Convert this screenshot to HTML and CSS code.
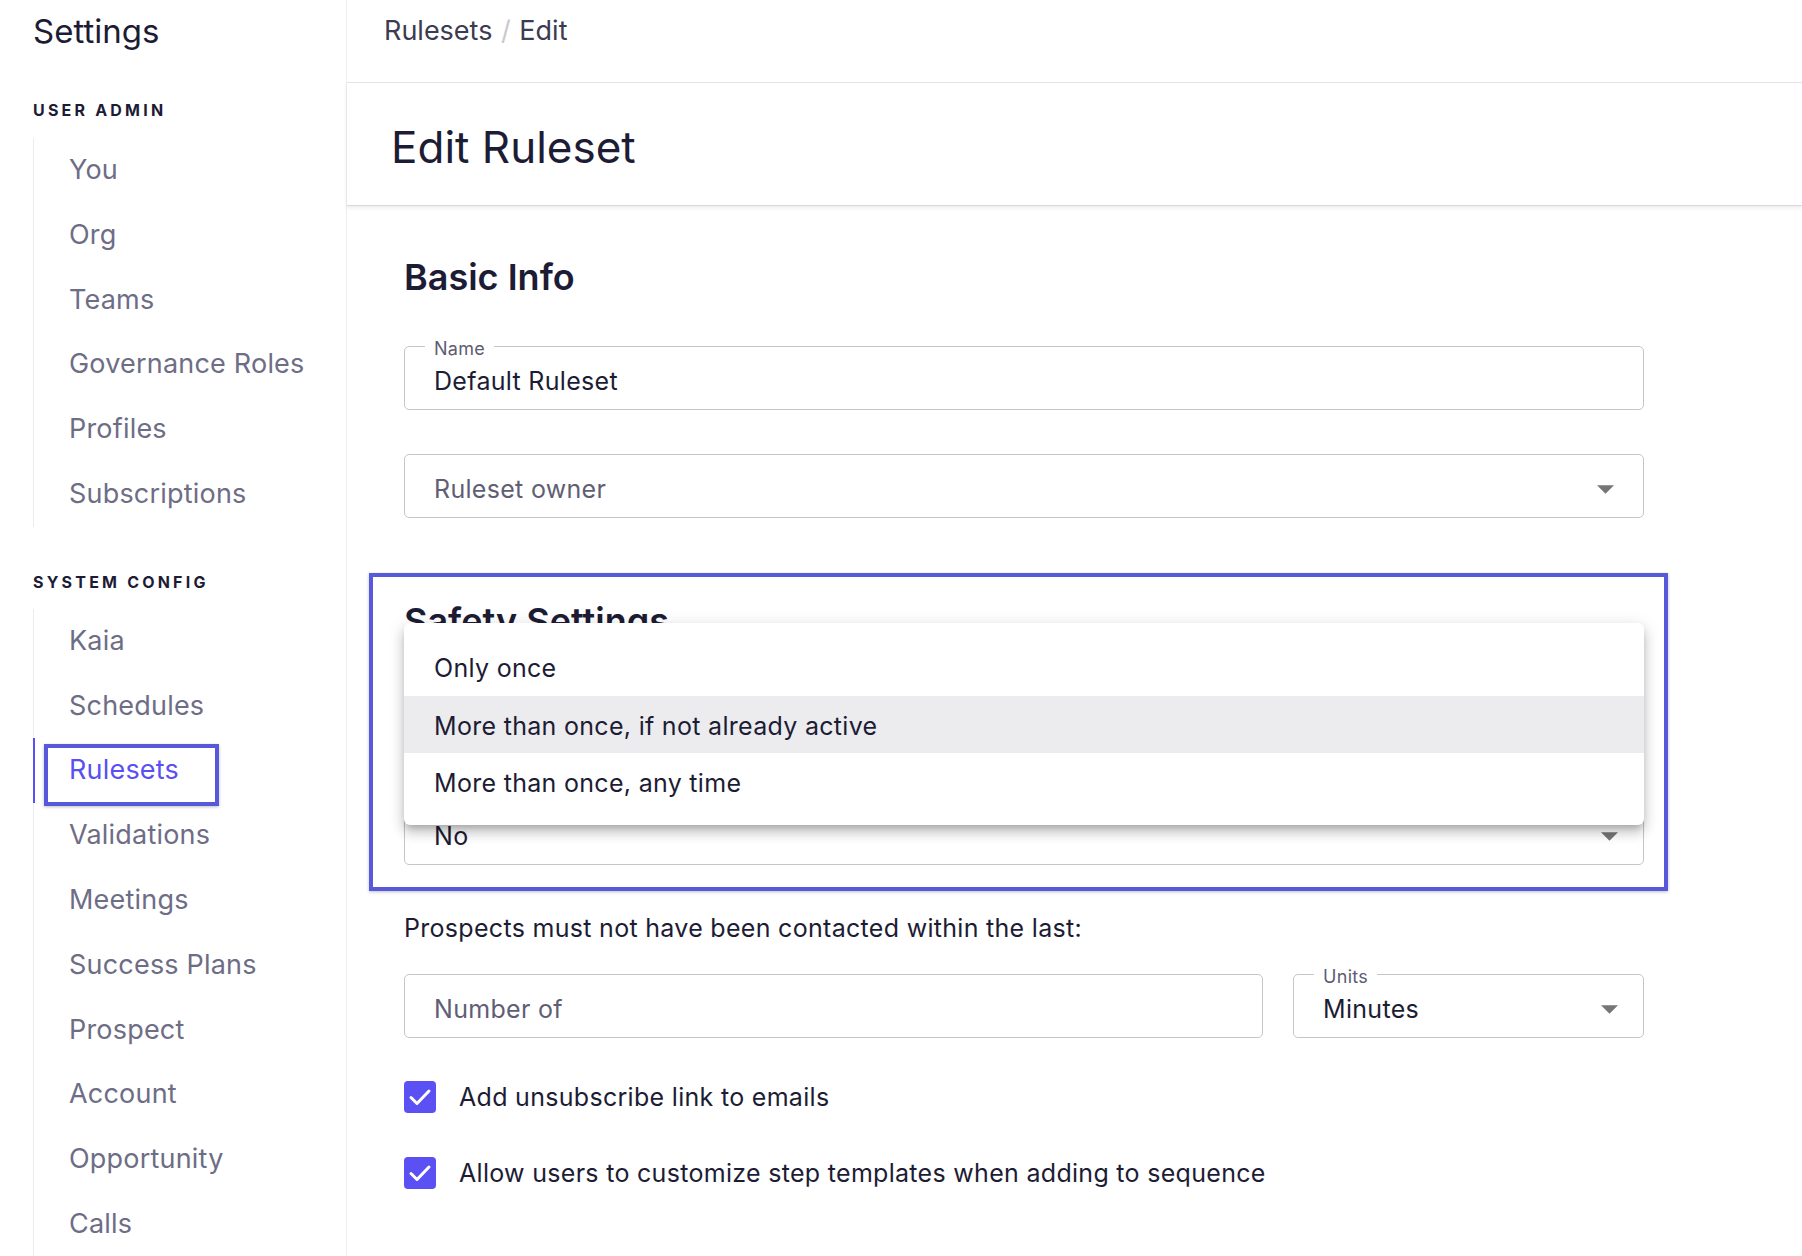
FILE: index.html
```html
<!DOCTYPE html>
<html lang="en">
<head>
  <meta charset="UTF-8" />
  <meta name="viewport" content="width=device-width, initial-scale=1.0" />
  <title>Edit Ruleset</title>
  <link rel="stylesheet" href="styles.css">
</head>
<body>
  <div class="app">
    <aside class="sidebar">
      <div class="sidebar-title">Settings</div>
      <div class="nav-section">User Admin</div>
      <ul class="nav-list">
        <li>You</li>
        <li>Org</li>
        <li>Teams</li>
        <li>Governance Roles</li>
        <li>Profiles</li>
        <li>Subscriptions</li>
      </ul>
      <div class="nav-section second">System Config</div>
      <ul class="nav-list">
        <li>Kaia</li>
        <li>Schedules</li>
        <li class="active">Rulesets<span class="annotation-box"></span></li>
        <li>Validations</li>
        <li>Meetings</li>
        <li>Success Plans</li>
        <li>Prospect</li>
        <li>Account</li>
        <li>Opportunity</li>
        <li>Calls</li>
      </ul>
    </aside>

    <main class="main">
      <div class="breadcrumb">Rulesets <span class="sep">/</span> Edit</div>
      <div class="page-head">
        <h1>Edit Ruleset</h1>
      </div>

      <div class="content">
        <h2 class="section-title">Basic Info</h2>

        <div class="field name-field">
          <span class="field-label">Name</span>
          <span class="field-value">Default Ruleset</span>
        </div>

        <div class="field owner-field">
          <span class="placeholder">Ruleset owner</span>
          <svg class="arrow" viewBox="7 10 10 5"><path d="M7 10l5 5 5-5z"/></svg>
        </div>

        <div class="safety">
          <h2 class="section-title">Safety Settings</h2>
          <div class="field repeat-field">
            <span class="field-label">Add prospects to sequence</span>
            <span class="field-value">More than once, if not already active</span>
            <svg class="arrow" viewBox="7 10 10 5"><path d="M7 10l5 5 5-5z"/></svg>
          </div>
          <div class="field no-field">
            <span class="field-value">No</span>
            <svg class="arrow" viewBox="7 10 10 5"><path d="M7 10l5 5 5-5z"/></svg>
          </div>

          <ul class="menu">
            <li>Only once</li>
            <li class="hovered">More than once, if not already active</li>
            <li>More than once, any time</li>
          </ul>
          <div class="annotation-frame"></div>
        </div>

        <p class="hint">Prospects must not have been contacted within the last:</p>

        <div class="row">
          <div class="field number-field">
            <span class="placeholder">Number of</span>
          </div>
          <div class="field units-field">
            <span class="field-label">Units</span>
            <span class="field-value">Minutes</span>
            <svg class="arrow" viewBox="7 10 10 5"><path d="M7 10l5 5 5-5z"/></svg>
          </div>
        </div>

        <div class="check first">
          <span class="box"><svg viewBox="0 0 32 32"><polyline points="7,16.5 13,22.5 25,10"/></svg></span>
          <span>Add unsubscribe link to emails</span>
        </div>
        <div class="check">
          <span class="box"><svg viewBox="0 0 32 32"><polyline points="7,16.5 13,22.5 25,10"/></svg></span>
          <span>Allow users to customize step templates when adding to sequence</span>
        </div>
      </div>
    </main>
  </div>
</body>
</html>
```

FILE: styles.css
```css
body {
  margin: 0;
  font-family: Inter, "Noto Sans", sans-serif;
  color: #1d1c35;
  background: #fff;
}
.app {
  display: flex;
  height: 100vh;
  overflow: hidden;
}

/* sidebar */
.sidebar {
  width: 347px;
  flex-shrink: 0;
  border-right: 1px solid #efeff1;
  padding: 11px 0 0 33px;
  box-sizing: border-box;
}
.sidebar-title {
  font-size: 33px;
  line-height: 40px;
  color: #1d1c35;
}
.nav-section {
  margin-top: 49px;
  font-size: 16px;
  line-height: 20px;
  font-weight: 700;
  letter-spacing: 3.2px;
  text-transform: uppercase;
  color: #1d1c35;
}
.nav-section.second {
  margin-top: 45px;
}
.nav-list {
  list-style: none;
  margin: 18px 0 0;
  padding: 0;
  border-left: 1px solid #ececef;
}
.nav-section.second + .nav-list {
  margin-top: 17px;
}
.nav-list li {
  position: relative;
  height: 64.8px;
  line-height: 64.8px;
  padding-left: 35px;
  font-size: 27px;
  letter-spacing: 0.2px;
  color: #6e6d86;
}
.nav-list li.active {
  color: #5a4ff2;
}
.nav-list li.active::before {
  content: "";
  position: absolute;
  left: -1px;
  top: 0;
  bottom: 0;
  width: 2px;
  background: #5a4ff2;
}
.annotation-box {
  position: absolute;
  left: 10px;
  top: 6px;
  width: 175px;
  height: 62px;
  box-sizing: border-box;
  border: 4px solid #5858da;
  box-shadow: 0 1px 3px rgba(0, 0, 0, 0.25);
}

/* main */
.main {
  flex: 1;
}
.breadcrumb {
  height: 83px;
  box-sizing: border-box;
  padding: 14px 0 0 37px;
  border-bottom: 1px solid #e6e6e8;
  font-size: 27px;
  line-height: 34px;
  color: #3c3b52;
}
.breadcrumb .sep {
  color: #c9c9ce;
  margin: 0 1px;
}
.page-head {
  height: 123px;
  box-sizing: border-box;
  padding: 6px 0 0 44px;
  display: flex;
  align-items: center;
  border-bottom: 1px solid #d9d9dc;
  box-shadow: 0 2px 4px rgba(0, 0, 0, 0.08);
}
.page-head h1 {
  margin: 0;
  font-size: 44px;
  font-weight: 400;
  color: #1d1c35;
}
.content {
  width: 1240px;
  padding: 49px 0 0 57px;
  display: flex;
  flex-direction: column;
  letter-spacing: 0.3px;
}
.section-title {
  margin: 0;
  font-size: 36px;
  line-height: 44px;
  font-weight: 600;
  letter-spacing: 0;
  color: #1d1c35;
}

/* outlined fields */
.field {
  position: relative;
  height: 64px;
  box-sizing: border-box;
  border: 1px solid #c6c6c9;
  border-radius: 5px;
  padding: 6px 29px 0;
  display: flex;
  align-items: center;
  font-size: 25px;
}
.field-label {
  position: absolute;
  left: 20px;
  top: -9px;
  padding: 0 9px;
  background: #fff;
  font-size: 18px;
  line-height: 22px;
  color: #5d5c70;
}
.field-value {
  flex: 1;
  color: #1d1c35;
}
.placeholder {
  flex: 1;
  color: #5f5e74;
}
.arrow {
  width: 17px;
  height: 9px;
  fill: #767676;
  margin-right: -4px;
}
.owner-field .arrow {
  margin-right: 0;
}
.name-field {
  margin-top: 47px;
}
.owner-field {
  margin-top: 44px;
}

/* safety settings block with open menu */
.safety {
  position: relative;
  margin-top: 81px;
  display: flex;
  flex-direction: column;
}
.repeat-field {
  margin-top: 46px;
}
.no-field {
  margin-top: 48px;
}
.menu {
  position: absolute;
  top: 24px;
  left: 0;
  right: 0;
  margin: 0;
  padding: 15px 0 14px;
  list-style: none;
  background: #fff;
  border-radius: 6px;
  box-shadow: 0 5px 6px -3px rgba(0, 0, 0, 0.2), 0 8px 12px 1px rgba(0, 0, 0, 0.14), 0 3px 16px 2px rgba(0, 0, 0, 0.1);
}
.menu li {
  height: 57.5px;
  box-sizing: border-box;
  padding: 3px 0 0 30px;
  line-height: 54.5px;
  font-size: 25px;
  color: #1d1c35;
}
.menu li.hovered {
  background: #ececee;
}
.annotation-frame {
  position: absolute;
  left: -35px;
  right: -24px;
  top: -26px;
  bottom: -26px;
  border: 4px solid #5858da;
  box-shadow: 0 1px 3px rgba(0, 0, 0, 0.25);
}

.hint {
  margin: 47px 0 0;
  font-size: 25px;
  line-height: 32px;
  color: #1d1c35;
}
.row {
  margin-top: 30px;
  display: flex;
  gap: 30px;
}
.number-field {
  flex: 1;
}
.units-field {
  width: 351px;
}

.check {
  margin-top: 36px;
  height: 40px;
  display: flex;
  align-items: center;
  gap: 23px;
  font-size: 25px;
  color: #1d1c35;
}
.check.first {
  margin-top: 39px;
}
.check .box {
  width: 32px;
  height: 32px;
  border-radius: 4px;
  background: #5b50f4;
  display: flex;
}
.check svg {
  width: 32px;
  height: 32px;
  fill: none;
  stroke: #fff;
  stroke-width: 3;
  stroke-linecap: round;
  stroke-linejoin: round;
}
```
